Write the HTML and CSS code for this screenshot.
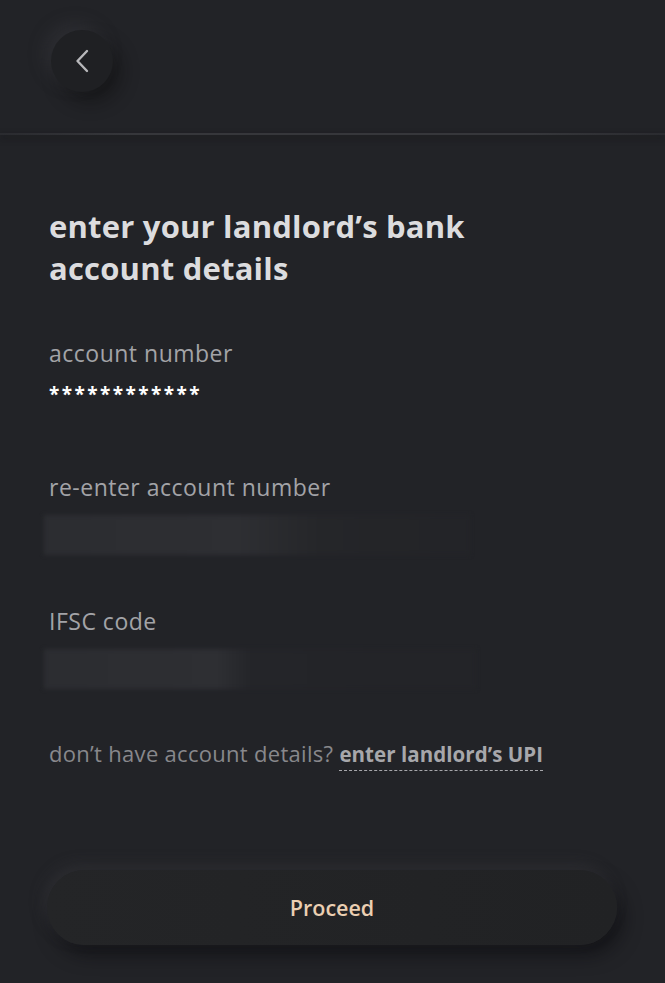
FILE: index.html
```html
<!DOCTYPE html>
<html lang="en">
<head>
<meta charset="utf-8">
<link rel="stylesheet" href="styles.css">
</head>
<body>
<div class="screen">
  <header class="topbar">
    <button class="back" aria-label="back">
      <svg width="16" height="26" viewBox="0 0 16 26"><path d="M13 3 L3.5 13 L13 23" fill="none" stroke="#b8b8bb" stroke-width="2.4" stroke-linecap="round" stroke-linejoin="round"/></svg>
    </button>
  </header>
  <div class="divider"></div>
  <main class="content">
    <h1 class="title">enter your landlord’s bank account details</h1>
    <div class="field">
      <div class="label">account number</div>
      <div class="masked">************</div>
    </div>
    <div class="field">
      <div class="label">re-enter account number</div>
      <div class="blur-input"></div>
    </div>
    <div class="field ifsc">
      <div class="label">IFSC code</div>
      <div class="blur-input short"></div>
    </div>
    <p class="alt">don’t have account details? <a class="link">enter landlord’s UPI</a></p>
  </main>
  <div class="footer">
    <button class="proceed">Proceed</button>
  </div>
</div>
</body>
</html>
```
FILE: styles.css
```css
* { box-sizing: border-box; }
html, body { margin: 0; padding: 0; }
body {
  background: #222327;
  font-family: "Open Sans", "Noto Sans", sans-serif;
  width: 665px;
  height: 983px;
  overflow: hidden;
}
.screen {
  display: flex;
  flex-direction: column;
  height: 983px;
}
.topbar {
  height: 133px;
  padding: 30px 0 0 51px;
}
.back {
  width: 62px;
  height: 62px;
  border-radius: 50%;
  border: none;
  background: #1f2023;
  display: flex;
  align-items: center;
  justify-content: center;
  box-shadow: -7px -7px 16px rgba(62,62,68,0.35), 8px 10px 18px rgba(10,10,12,0.45);
  padding: 0;
}
.divider {
  height: 2px;
  background: linear-gradient(90deg, rgba(60,61,66,0.3) 0%, #36373b 20%, #36373b 80%, rgba(60,61,66,0.3) 100%);
  box-shadow: 0 3px 6px rgba(15,15,18,0.6);
}
.content {
  padding: 70px 30px 0 49px;
  flex: 1;
}
.title {
  margin: 0;
  font-size: 31px;
  line-height: 42px;
  font-weight: 700;
  color: #dcdcde;
  letter-spacing: 0.2px;
  width: 470px;
}
.field { margin-top: 50px; }
.field + .field { margin-top: 40px; }
.field.ifsc { margin-top: 52px; }
.label {
  font-size: 23px;
  line-height: 28px;
  color: #a3a3a7;
  letter-spacing: 0.5px;
}
.masked {
  margin-top: 14px;
  color: #ffffff;
  font-size: 19px;
  font-weight: 700;
  letter-spacing: 2.4px;
  line-height: 26px;
  height: 52px;
}
.blur-input {
  margin: 14px 0 0 -5px;
  width: 426px;
  height: 40px;
  background: linear-gradient(90deg, #2c2d31 0%, #2e2f33 45%, #252629 65%, #232428 100%);
  filter: blur(2px);
}
.blur-input.short { width: 432px; background: linear-gradient(90deg, #2c2d31 0%, #2e2f33 40%, #242529 48%, #232428 100%); }
.alt {
  margin: 50px 0 0;
  font-size: 22px;
  line-height: 28px;
  color: #88888c;
  letter-spacing: 0.3px;
  white-space: nowrap;
}
.link {
  color: #a7a7ab;
  font-size: 20.5px;
  font-weight: 700;
  letter-spacing: 0.05px;
  border-bottom: 1.5px dashed #a7a7ab;
  padding-bottom: 2px;
}
.footer {
  padding: 0 48px 38px 47px;
}
.proceed {
  width: 570px;
  height: 75px;
  border-radius: 38px;
  border: none;
  background: linear-gradient(90deg, #242527 0%, #212224 100%);
  box-shadow: -4px -6px 14px rgba(55,56,60,0.45), 6px 10px 18px rgba(10,10,12,0.55);
  color: #ebcfb2;
  font-family: "Open Sans", sans-serif;
  font-size: 21.5px;
  font-weight: 600;
}
```
